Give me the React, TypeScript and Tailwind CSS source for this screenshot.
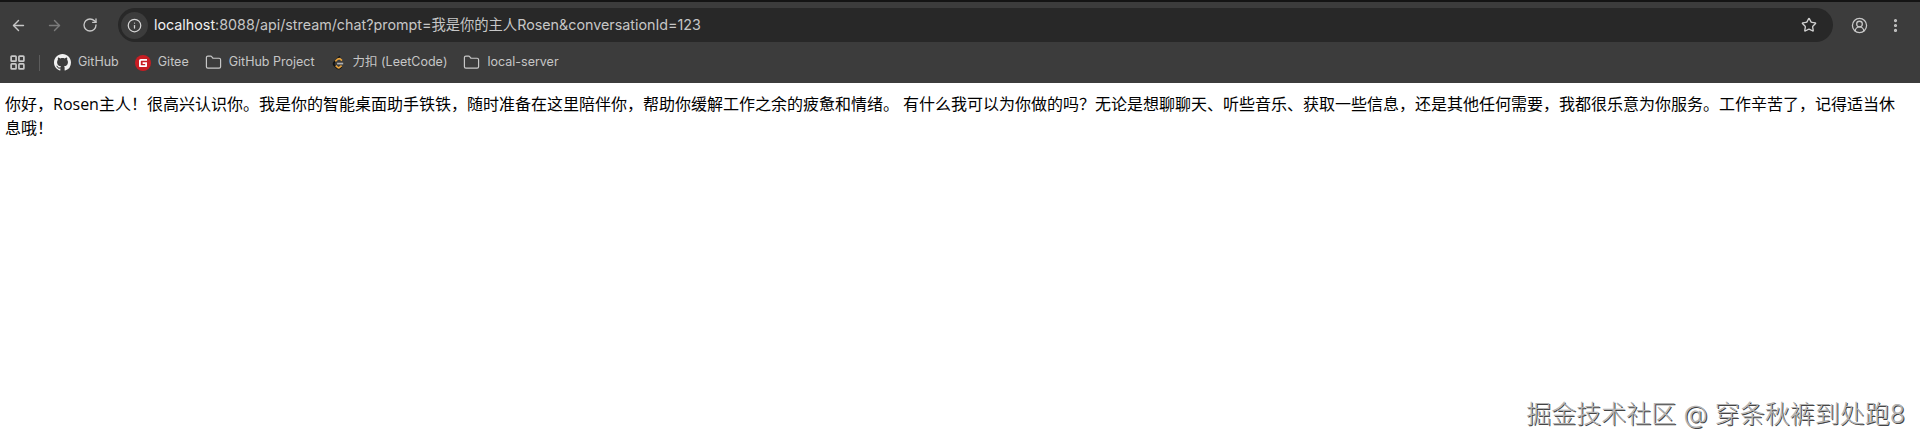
import { ArrowLeft, ArrowRight, RotateCw, Info, Star, CircleUserRound, EllipsisVertical, Folder, LayoutGrid } from 'lucide-react'

const cjk = "font-['Inter','Noto_Sans_CJK_SC',sans-serif]"

function GithubIcon() {
  return (
    <svg viewBox="0 0 16 16" className="w-[17px] h-[17px] shrink-0" fill="#f1f1f1">
      <path d="M8 0C3.58 0 0 3.58 0 8c0 3.54 2.29 6.53 5.47 7.59.4.07.55-.17.55-.38 0-.19-.01-.82-.01-1.49-2.01.37-2.53-.49-2.69-.94-.09-.23-.48-.94-.82-1.13-.28-.15-.68-.52-.01-.53.63-.01 1.08.58 1.23.82.72 1.21 1.87.87 2.33.66.07-.52.28-.87.51-1.07-1.78-.2-3.64-.89-3.64-3.95 0-.87.31-1.59.82-2.15-.08-.2-.36-1.02.08-2.12 0 0 .67-.21 2.2.82.64-.18 1.32-.27 2-.27s1.36.09 2 .27c1.53-1.04 2.2-.82 2.2-.82.44 1.1.16 1.92.08 2.12.51.56.82 1.27.82 2.15 0 3.07-1.87 3.75-3.65 3.95.29.25.54.73.54 1.48 0 1.07-.01 1.93-.01 2.2 0 .21.15.46.55.38A8.01 8.01 0 0 0 16 8c0-4.42-3.58-8-8-8z" />
    </svg>
  )
}

function GiteeIcon() {
  return (
    <svg viewBox="0 0 16 16" className="w-[16px] h-[16px] shrink-0">
      <circle cx="8" cy="8" r="8" fill="#c71d23" />
      <path d="M4 7v4.2c0 .5.3.8.8.8h6.4c.5 0 .8-.3.8-.8V7.3H7.6v1.6h2.6v1.4H5.8V6.2c0-.3.2-.5.5-.5H12V4H5.8C4.8 4 4 4.8 4 5.8z" fill="#fff" />
    </svg>
  )
}

function LeetcodeIcon() {
  return (
    <svg viewBox="0 0 16 16" className="w-[15px] h-[16px] shrink-0" fill="none" strokeWidth="1.8">
      <path d="M9.5 1 3.6 7c-1 1.1-1 2.6 0 3.6l2.6 2.6c1.1 1 2.7 1 3.7 0l1.4-1.4" stroke="#111111" />
      <path d="M4.6 6.2 7 4c1-.8 2.4-.8 3.3.1l1.4 1.3" stroke="#e8a33d" />
      <path d="M6.5 8.6h6.5" stroke="#b3b3b3" />
      <path d="M5 10.8l1.8 1.7c.8.7 2 .7 2.7 0l1.8-1.7" stroke="#e8a33d" />
    </svg>
  )
}

function Bookmark({ icon, label }: { icon: React.ReactNode; label: string }) {
  return (
    <div className="flex items-center gap-[7px] h-full">
      {icon}
      <span className="text-[12.5px] text-[#c6c6c6] whitespace-nowrap">{label}</span>
    </div>
  )
}

export default function App() {
  return (
    <div className={`relative h-[435px] bg-white overflow-hidden ${cjk}`}>
      <div className="bg-[#3c3c3c] border-t-2 border-[#141414]">
        <div className="flex items-end h-[40px]">
          <div className="flex items-center h-[34px] w-[118px] shrink-0 pl-[10px] gap-[19px] text-[#c7c7c7]">
            <ArrowLeft size={17} strokeWidth={2} />
            <ArrowRight size={17} strokeWidth={2} className="text-[#7b7b7b]" />
            <RotateCw size={16} strokeWidth={2} />
          </div>
          <div className="flex items-center flex-1 h-[34px] rounded-full bg-[#282828]">
            <div className="flex items-center justify-center w-[27px] h-[27px] ml-[3px] rounded-full bg-[#3c3c3c]">
              <Info size={15} strokeWidth={2} className="text-[#d4d4d4]" />
            </div>
            <div className="ml-[6px] text-[14.3px] text-[#c6c6c6] whitespace-nowrap">
              <span className="text-[#f0f0f0]">localhost</span>:8088/api/stream/chat?prompt=我是你的主人Rosen&amp;conversationId=123
            </div>
            <Star size={16} strokeWidth={2} className="ml-auto mr-[16px] text-[#d0d0d0]" />
          </div>
          <div className="flex items-center h-[34px] w-[87px] shrink-0 pl-[18px] gap-[19px] text-[#c7c7c7]">
            <CircleUserRound size={17} strokeWidth={1.8} />
            <EllipsisVertical size={17} strokeWidth={2.5} />
          </div>
        </div>
        <div className="flex items-center h-[41px] pl-[9px]">
          <LayoutGrid size={17} strokeWidth={2.4} className="text-[#c7c7c7]" />
          <div className="w-px h-[16px] bg-[#5c5c5c] ml-[13px] mr-[14px]" />
          <div className="flex items-center gap-[16px] h-full">
            <Bookmark icon={<GithubIcon />} label="GitHub" />
            <Bookmark icon={<GiteeIcon />} label="Gitee" />
            <Bookmark icon={<Folder size={17} strokeWidth={1.7} className="text-[#c7c7c7]" />} label="GitHub Project" />
            <Bookmark icon={<LeetcodeIcon />} label="力扣 (LeetCode)" />
            <Bookmark icon={<Folder size={17} strokeWidth={1.7} className="text-[#c7c7c7]" />} label="local-server" />
          </div>
        </div>
      </div>
      <p className="pl-[5px] pr-[12px] pt-[9px] text-[16px] leading-[24px] text-black font-['Open_Sans','Noto_Sans_CJK_SC',sans-serif]">
        你好，Rosen主人！很高兴认识你。我是你的智能桌面助手铁铁，随时准备在这里陪伴你，帮助你缓解工作之余的疲惫和情绪。 有什么我可以为你做的吗？无论是想聊聊天、听些音乐、获取一些信息，还是其他任何需要，我都很乐意为你服务。工作辛苦了，记得适当休息哦！
      </p>
      <div className="absolute right-[15px] bottom-[5px] text-[25px] leading-[32px] font-light text-[#b4b4b4] whitespace-nowrap [text-shadow:1px_1px_0_#444444]">
        掘金技术社区 @ 穿条秋裤到处跑8
      </div>
    </div>
  )
}
